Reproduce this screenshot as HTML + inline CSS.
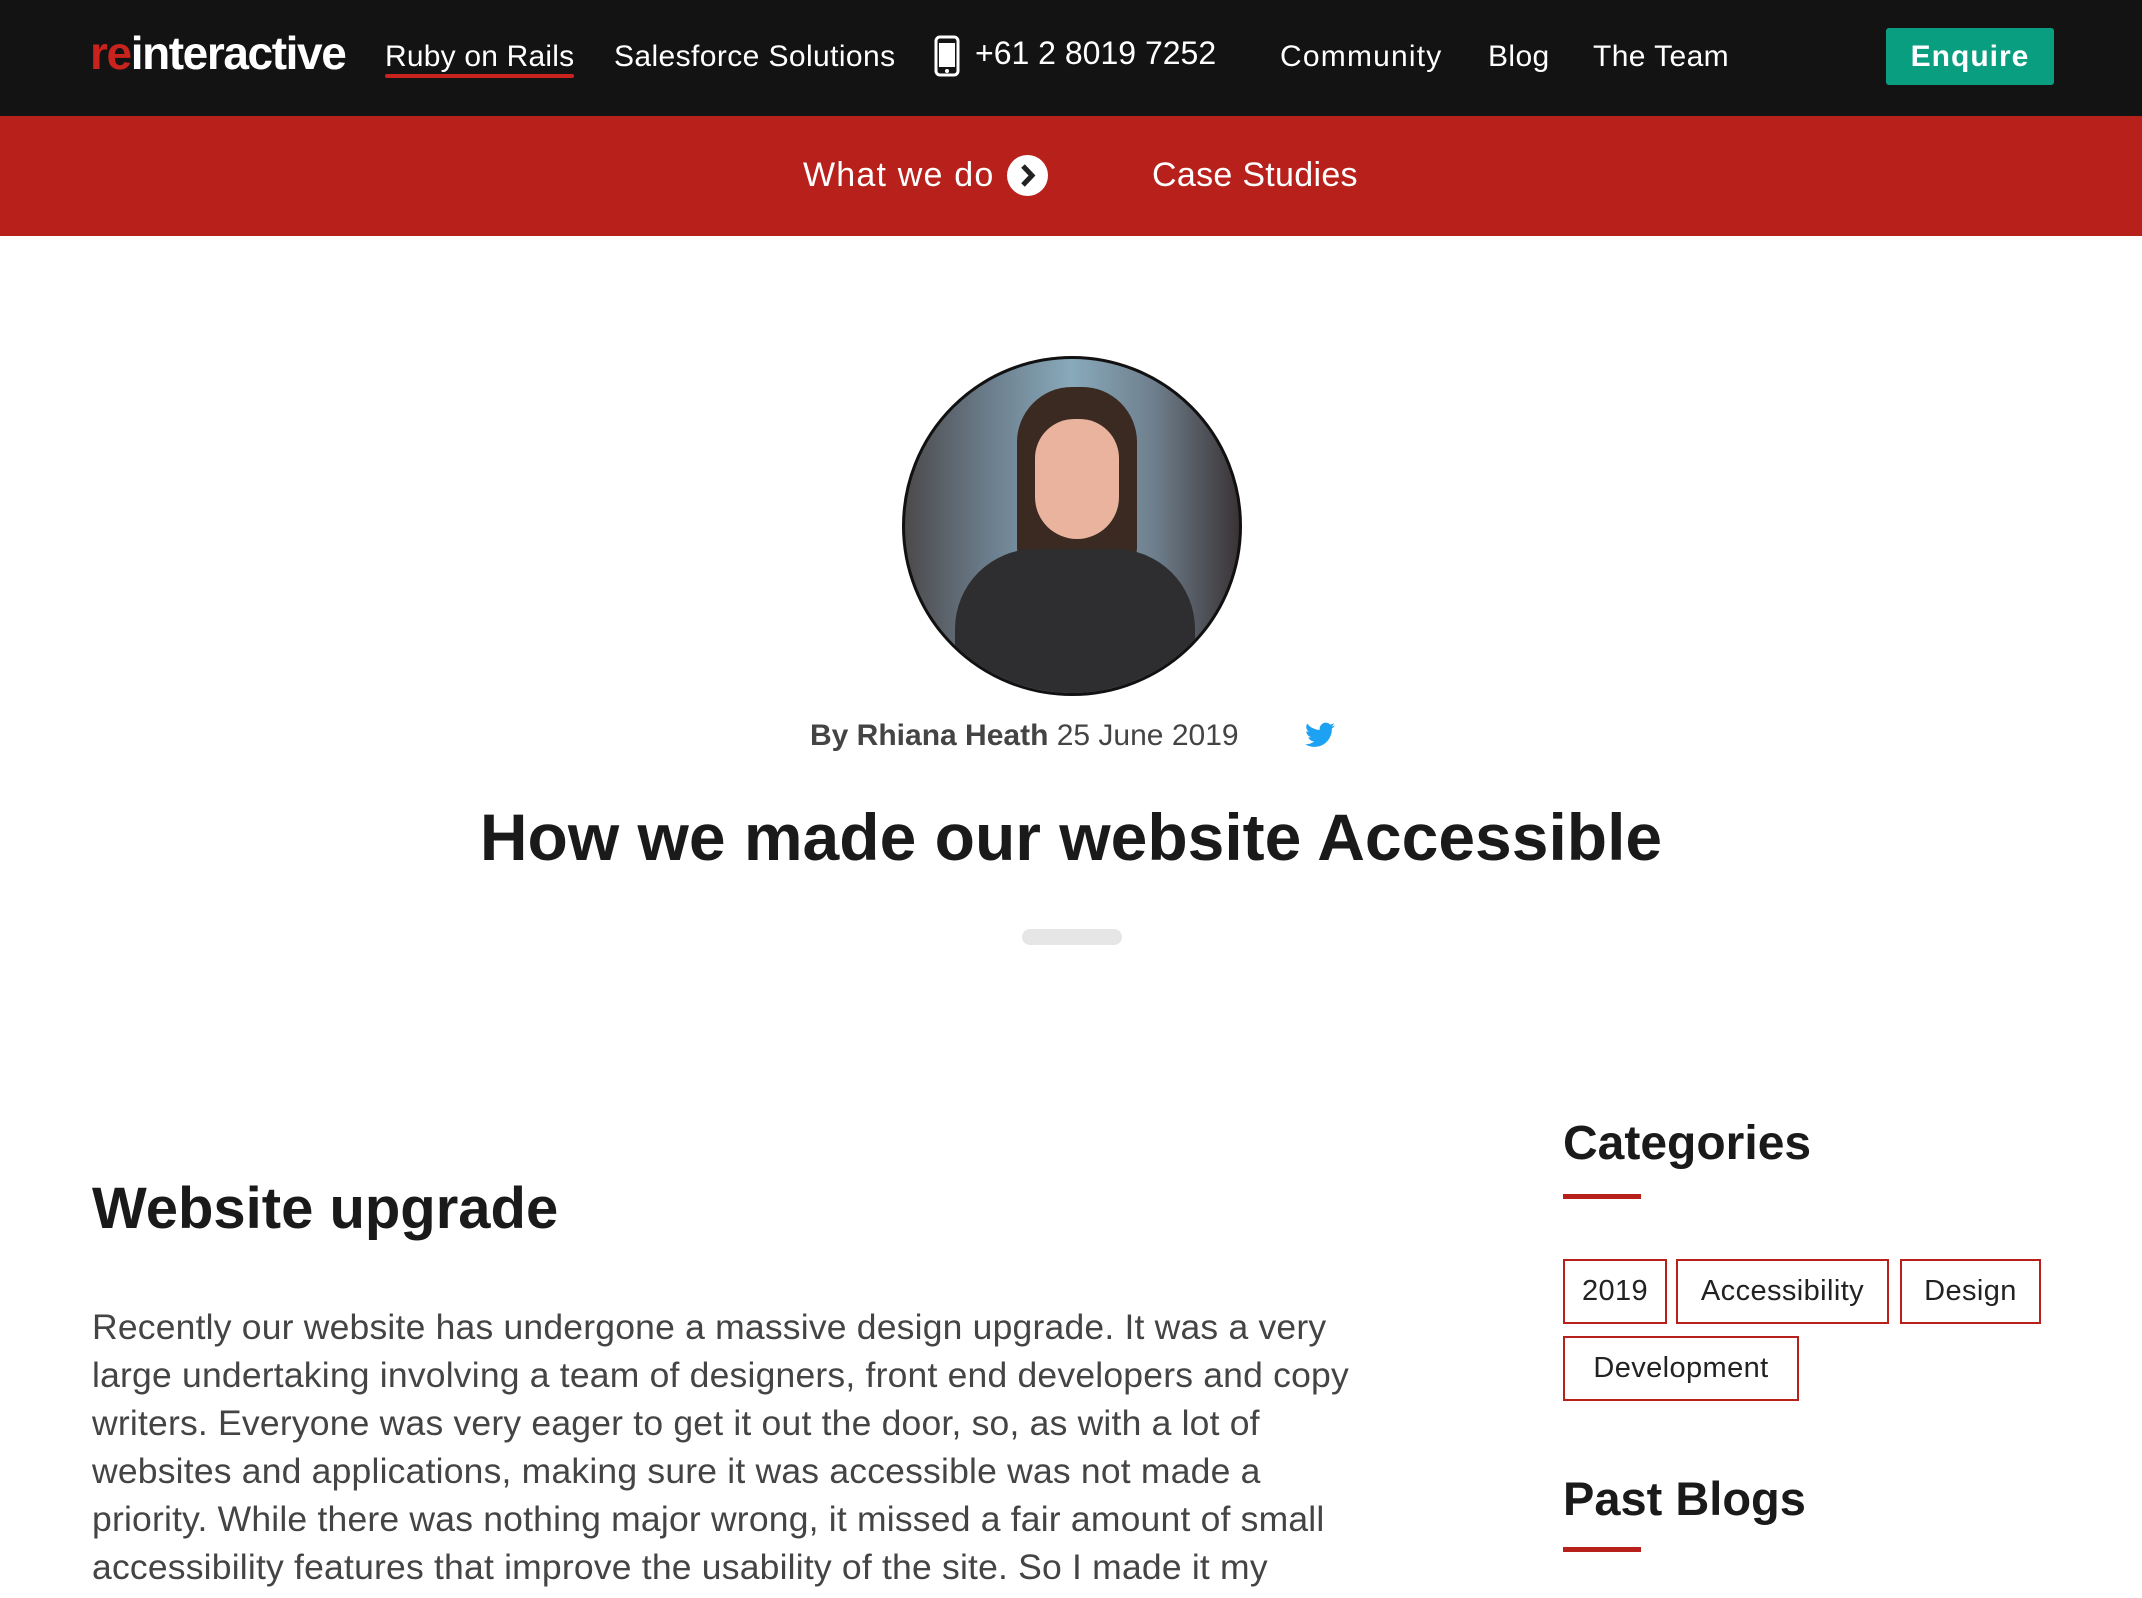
<!DOCTYPE html>
<html><head><meta charset="utf-8"><style>
*{margin:0;padding:0;box-sizing:border-box}
body{width:2142px;height:1598px;overflow:hidden;background:#fff;font-family:"Liberation Sans",sans-serif;color:#222;position:relative}
.abs{position:absolute;white-space:nowrap}
#top{position:absolute;left:0;top:0;width:2142px;height:116px;background:#131313}
#red{position:absolute;left:0;top:116px;width:2142px;height:120px;background:#b8201b}
.nav{color:#fff;font-size:30px;top:40px;letter-spacing:0.4px}
.tag{position:absolute;border:2px solid #b8201b;font-size:29px;color:#222;display:flex;align-items:center;justify-content:center;letter-spacing:0.4px}
.bar{position:absolute;left:1563px;width:78px;height:5px;background:#b8201b}
p.body{position:absolute;left:92px;top:1303px;font-size:35.5px;line-height:48px;color:#444;white-space:nowrap;letter-spacing:0.2px}
</style></head><body>
<div id="top"></div>
<div id="red"></div>
<div class="abs" style="left:90px;top:26px;font-size:46px;letter-spacing:-1.4px;color:#fff;font-weight:bold"><span style="color:#c8231d">re</span>interactive</div>
<div class="abs nav" style="left:385px;letter-spacing:0.2px">Ruby on Rails</div>
<div class="abs" style="left:385px;top:74px;width:189px;height:4px;background:#c8231d;border-radius:2px"></div>
<div class="abs nav" style="left:614px">Salesforce Solutions</div>
<svg class="abs" style="left:934px;top:35px" width="26" height="42" viewBox="0 0 26 42"><rect x="2" y="2" width="22" height="38" rx="4" fill="none" stroke="#fff" stroke-width="3"/><rect x="5" y="8" width="16" height="24" fill="#fff"/><circle cx="13" cy="36" r="2" fill="#fff"/></svg>
<div class="abs nav" style="left:975px;top:35px;font-size:32px;letter-spacing:0">+61 2 8019 7252</div>
<div class="abs nav" style="left:1280px;letter-spacing:1.2px">Community</div>
<div class="abs nav" style="left:1488px">Blog</div>
<div class="abs nav" style="left:1593px">The Team</div>
<div class="abs" style="left:1886px;top:28px;width:168px;height:57px;background:#0a9e80;border-radius:3px;color:#fff;font-size:30px;font-weight:bold;display:flex;align-items:center;justify-content:center;letter-spacing:1px">Enquire</div>
<div class="abs" style="left:803px;top:156px;color:#fff;font-size:34px;letter-spacing:1.2px">What we do</div>
<svg class="abs" style="left:1007px;top:155px" width="41" height="41" viewBox="0 0 41 41"><circle cx="20.5" cy="20.5" r="20.5" fill="#fff"/><path d="M16 11 L25 20.5 L16 30" fill="none" stroke="#222" stroke-width="5"/></svg>
<div class="abs" style="left:1152px;top:156px;color:#fff;font-size:34px;letter-spacing:0.3px">Case Studies</div>
<div class="abs" style="left:902px;top:356px;width:340px;height:340px;border-radius:50%;border:3px solid #111;overflow:hidden;background:linear-gradient(90deg,#4c4a4c 0%,#6b7d8c 25%,#8ab 50%,#6e7e8c 75%,#3a3335 100%)">
<div style="position:absolute;left:112px;top:28px;width:120px;height:190px;border-radius:55px 55px 30px 30px;background:#3a2a22"></div>
<div style="position:absolute;left:130px;top:60px;width:84px;height:120px;border-radius:42px 42px 45px 45px;background:#e9b39e"></div>
<div style="position:absolute;left:50px;top:190px;width:240px;height:200px;border-radius:80px 80px 0 0;background:#2e2d2f"></div>
</div>
<div class="abs" style="left:810px;top:719px;font-size:30px;color:#444"><b>By Rhiana Heath</b> 25 June 2019</div>
<svg class="abs" style="left:1305px;top:722px" width="30" height="26" viewBox="0 0 24 20"><path d="M24 2.4a10 10 0 0 1-2.8.8A5 5 0 0 0 23.3.5a10 10 0 0 1-3.1 1.2A4.9 4.9 0 0 0 11.8 6 14 14 0 0 1 1.7.9a4.9 4.9 0 0 0 1.5 6.6A4.9 4.9 0 0 1 1 6.9a4.9 4.9 0 0 0 3.9 4.8 4.9 4.9 0 0 1-2.2.1 4.9 4.9 0 0 0 4.6 3.4A9.9 9.9 0 0 1 0 17.3 14 14 0 0 0 7.5 19.5c9 0 14-7.5 14-14v-.6A10 10 0 0 0 24 2.4z" fill="#1da1f2"/></svg>
<div class="abs" style="left:0;width:2142px;text-align:center;top:799px;font-size:66px;font-weight:bold;color:#1a1a1a">How we made our website Accessible</div>
<div class="abs" style="left:1022px;top:929px;width:100px;height:16px;border-radius:8px;background:#e6e6e6"></div>
<div class="abs" style="left:92px;top:1175px;font-size:58px;font-weight:bold;color:#1a1a1a">Website upgrade</div>
<p class="body">Recently our website has undergone a massive design upgrade. It was a very<br>large undertaking involving a team of designers, front end developers and copy<br>writers. Everyone was very eager to get it out the door, so, as with a lot of<br>websites and applications, making sure it was accessible was not made a<br>priority. While there was nothing major wrong, it missed a fair amount of small<br>accessibility features that improve the usability of the site. So I made it my</p>
<div class="abs" style="left:1563px;top:1116px;font-size:48px;font-weight:bold;color:#1a1a1a">Categories</div>
<div class="bar" style="top:1194px"></div>
<div class="tag" style="left:1563px;top:1259px;width:104px;height:65px">2019</div>
<div class="tag" style="left:1676px;top:1259px;width:213px;height:65px">Accessibility</div>
<div class="tag" style="left:1900px;top:1259px;width:141px;height:65px">Design</div>
<div class="tag" style="left:1563px;top:1336px;width:236px;height:65px">Development</div>
<div class="abs" style="left:1563px;top:1471px;font-size:47px;font-weight:bold;color:#1a1a1a">Past Blogs</div>
<div class="bar" style="top:1547px"></div>
</body></html>
